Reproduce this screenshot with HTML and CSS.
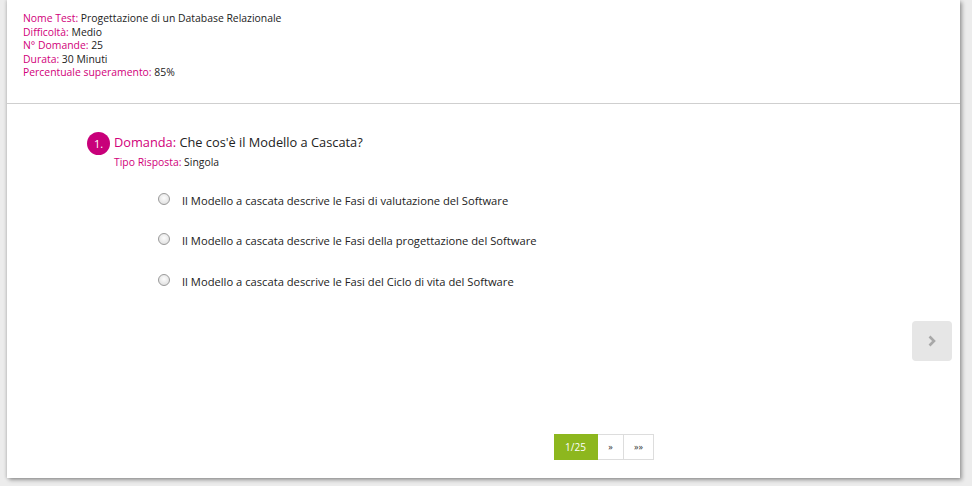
FILE: index.html
```html
<!DOCTYPE html>
<html lang="it">
<head>
<meta charset="utf-8">
<link rel="stylesheet" href="styles.css">
</head>
<body>
<div class="card">
  <div class="info">
    <div><span class="lbl">Nome Test:</span> Progettazione di un Database Relazionale</div>
    <div><span class="lbl">Difficoltà:</span> Medio</div>
    <div><span class="lbl">N° Domande:</span> 25</div>
    <div><span class="lbl">Durata:</span> 30 Minuti</div>
    <div><span class="lbl">Percentuale superamento:</span> 85%</div>
  </div>
  <div class="body">
    <div class="question">
      <span class="num">1.</span>
      <span class="qtext"><span class="lbl">Domanda:</span> Che cos'è il Modello a Cascata?</span>
    </div>
    <div class="tipo"><span class="lbl">Tipo Risposta:</span> Singola</div>
    <div class="answers">
      <label class="answer"><span class="radio"></span>Il Modello a cascata descrive le Fasi di valutazione del Software</label>
      <label class="answer"><span class="radio"></span>Il Modello a cascata descrive le Fasi della progettazione del Software</label>
      <label class="answer"><span class="radio"></span>Il Modello a cascata descrive le Fasi del Ciclo di vita del Software</label>
    </div>
    <div class="nextrow">
      <div class="next">
        <svg width="10" height="12" viewBox="0 0 10 12"><path d="M2.5 1.5 L7 6 L2.5 10.5" fill="none" stroke="#a8a8a8" stroke-width="2.6"/></svg>
      </div>
    </div>
    <div class="pager">
      <span class="pg active">1/25</span>
      <span class="pg">»</span>
      <span class="pg wide">»»</span>
    </div>
  </div>
</div>
</body>
</html>
```
FILE: styles.css
```css
html, body {
  margin: 0;
  padding: 0;
}
body {
  background: #ececec;
  font-family: "Open Sans", "DejaVu Sans", sans-serif;
  color: #222;
  width: 972px;
  height: 486px;
  overflow: hidden;
}
.card {
  margin-left: 7px;
  width: 953px;
  height: 478px;
  background: #fff;
  box-shadow: 2px 2px 4px rgba(0,0,0,0.35), -1px 0 3px rgba(0,0,0,0.15);
  box-sizing: border-box;
}
.lbl {
  color: #d1007a;
}
.info {
  padding: 12px 0 0 16px;
  box-sizing: border-box;
  border-bottom: 1px solid #cfcfcf;
  font-size: 10.4px;
  line-height: 13.5px;
  height: 104px;
}
.body {
  position: relative;
}
.question {
  display: flex;
  align-items: center;
  padding: 27px 0 0 80px;
  height: 24px;
}
.num {
  width: 23px;
  height: 23px;
  border-radius: 50%;
  background: #c8007a;
  color: #fff;
  font-size: 11px;
  line-height: 23px;
  text-align: center;
  margin-right: 4px;
}
.qtext {
  font-size: 12.8px;
  margin-top: -3px;
}
.tipo {
  font-size: 10.4px;
  padding-left: 107px;
  margin-top: 0;
}
.answers {
  display: flex;
  flex-direction: column;
  gap: 23.3px;
  padding: 23px 0 0 151px;
}
.answer {
  display: flex;
  align-items: center;
  font-size: 11.2px;
  height: 17px;
}
.radio {
  width: 10px;
  height: 10px;
  border-radius: 50%;
  border: 1px solid #9a9a9a;
  background: radial-gradient(circle at 50% 40%, #fdfdfd 0%, #e4e4e4 70%, #cfcfcf 100%);
  margin-right: 12px;
  margin-top: -3px;
}
.nextrow {
  display: flex;
  justify-content: flex-end;
  padding: 31px 8px 0 0;
}
.next {
  width: 40px;
  height: 40px;
  border-radius: 4px;
  background: #e6e6e6;
  display: flex;
  align-items: center;
  justify-content: center;
}
.pager {
  display: flex;
  margin: 73px 0 0 547px;
  height: 26px;
}
.pg {
  width: 25px;
  border: 1px solid #ddd;
  border-left: none;
  font-size: 9px;
  line-height: 24px;
  text-align: center;
  color: #333;
}
.pg.wide {
  width: 29px;
}
.pg.active {
  width: 43px;
  background: #8db71e;
  border-color: #8db71e;
  color: #fff;
  font-size: 10px;
}
```
